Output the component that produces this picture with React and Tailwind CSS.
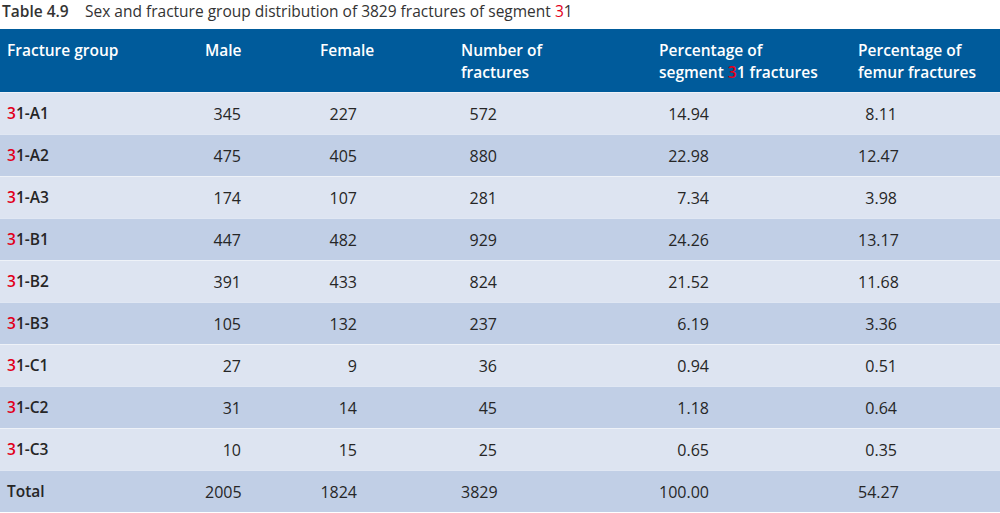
import React from 'react';

const rows = [
  ['A1', '345', '227', '572', '14.94', '8.11'],
  ['A2', '475', '405', '880', '22.98', '12.47'],
  ['A3', '174', '107', '281', '7.34', '3.98'],
  ['B1', '447', '482', '929', '24.26', '13.17'],
  ['B2', '391', '433', '824', '21.52', '11.68'],
  ['B3', '105', '132', '237', '6.19', '3.36'],
  ['C1', '27', '9', '36', '0.94', '0.51'],
  ['C2', '31', '14', '45', '1.18', '0.64'],
  ['C3', '10', '15', '25', '0.65', '0.35'],
];

// right edge of each number column, as box width from column start
const numW = ['w-[36px]', 'w-[37px]', 'w-[36px]', 'w-[50px]', 'w-[39px]'];
const cols = 'grid grid-cols-[198px_115px_141px_198px_199px_1fr] pl-[7px]';

function Red3() {
  return <span className="text-[#e2001a]">3</span>;
}

function Row({ label, values, dark }) {
  return (
    <div className={`${cols} h-[42px] items-center border-t border-white/50 ${dark ? 'bg-[#c1cfe6]' : 'bg-[#dde4f1]'}`}>
      <div className="font-semibold text-[15.5px]">{label}</div>
      {values.map((v, i) => (
        <div key={i}>
          <div className={`${numW[i]} text-right`}>{v}</div>
        </div>
      ))}
    </div>
  );
}

export default function App() {
  return (
    <div className="w-[1000px] h-[513px] bg-white text-[#262626] text-[16px] font-['Open_Sans',sans-serif] overflow-hidden">
      <div className="h-[29px] flex items-start pl-[2px] leading-[22px] text-[15.5px] text-[#333]">
        <span className="font-semibold w-[83px]">Table 4.9</span>
        <span>Sex and fracture group distribution of 3829 fractures of segment <Red3 />1</span>
      </div>

      <div className={`${cols} h-[63px] bg-[#005b9b] text-white font-semibold text-[15.5px] leading-[22px] pt-[10px]`}>
        <div>Fracture group</div>
        <div>Male</div>
        <div>Female</div>
        <div>Number of<br />fractures</div>
        <div>Percentage of<br />segment <Red3 />1 fractures</div>
        <div>Percentage of<br />femur fractures</div>
      </div>

      {rows.map((r, i) => (
        <Row
          key={r[0]}
          dark={i % 2 === 1}
          label={<><Red3 />1-{r[0]}</>}
          values={r.slice(1)}
        />
      ))}
      <Row dark label="Total" values={['2005', '1824', '3829', '100.00', '54.27']} />
    </div>
  );
}
